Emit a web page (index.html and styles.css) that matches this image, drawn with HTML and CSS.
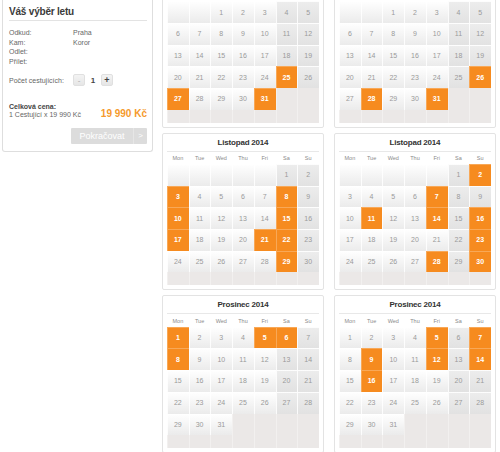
FILE: index.html
```html
<!DOCTYPE html>
<html lang="cs">
<head>
<meta charset="utf-8">
<title>Váš výběr letu</title>
<link rel="stylesheet" href="styles.css">
</head>
<body>
<div class="page">
  <aside class="sidebar">
    <h2 class="sb-title">Váš výběr letu</h2>
    <dl class="info">
      <dt>Odkud:</dt><dd>Praha</dd>
      <dt>Kam:</dt><dd>Koror</dd>
      <dt>Odlet:</dt><dd></dd>
      <dt>Přílet:</dt><dd></dd>
    </dl>
    <div class="pax">
      <span class="pax-label">Počet cestujících:</span>
      <span class="step minus">-</span>
      <span class="qty">1</span>
      <span class="step plus">+</span>
    </div>
    <div class="total">
      <div class="total-text">
        <div class="total-label">Celková cena:</div>
        <div>1 Cestující x 19 990 Kč</div>
      </div>
      <div class="price">19 990 Kč</div>
    </div>
    <div class="actions">
      <span class="btn"><span class="btn-text">Pokračovat</span><span class="btn-arrow">&gt;</span></span>
    </div>
  </aside>

  <main class="cals">
    <!-- Říjen left -->
    <section class="cal">
      <div class="cal-title">Říjen 2014</div>
      <div class="wd"><span>Mon</span><span>Tue</span><span>Wed</span><span>Thu</span><span>Fri</span><span>Sa</span><span>Su</span></div>
      <div class="days">
        <span></span><span></span><span>1</span><span>2</span><span>3</span><span class="w">4</span><span class="w">5</span>
        <span>6</span><span>7</span><span>8</span><span>9</span><span>10</span><span class="w">11</span><span class="w">12</span>
        <span>13</span><span>14</span><span>15</span><span>16</span><span>17</span><span class="w">18</span><span class="w">19</span>
        <span>20</span><span>21</span><span>22</span><span>23</span><span>24</span><span class="o">25</span><span class="w">26</span>
        <span class="o">27</span><span>28</span><span>29</span><span>30</span><span class="o">31</span><span class="x"></span><span class="x"></span>
        <span class="x"></span><span class="x"></span><span class="x"></span><span class="x"></span><span class="x"></span><span class="x"></span><span class="x"></span>
      </div>
    </section>
    <!-- Říjen right -->
    <section class="cal">
      <div class="cal-title">Říjen 2014</div>
      <div class="wd"><span>Mon</span><span>Tue</span><span>Wed</span><span>Thu</span><span>Fri</span><span>Sa</span><span>Su</span></div>
      <div class="days">
        <span></span><span></span><span>1</span><span>2</span><span>3</span><span class="w">4</span><span class="w">5</span>
        <span>6</span><span>7</span><span>8</span><span>9</span><span>10</span><span class="w">11</span><span class="w">12</span>
        <span>13</span><span>14</span><span>15</span><span>16</span><span>17</span><span class="w">18</span><span class="w">19</span>
        <span>20</span><span>21</span><span>22</span><span>23</span><span>24</span><span class="w">25</span><span class="o">26</span>
        <span>27</span><span class="o">28</span><span>29</span><span>30</span><span class="o">31</span><span class="x"></span><span class="x"></span>
        <span class="x"></span><span class="x"></span><span class="x"></span><span class="x"></span><span class="x"></span><span class="x"></span><span class="x"></span>
      </div>
    </section>
    <!-- Listopad left -->
    <section class="cal">
      <div class="cal-title">Listopad 2014</div>
      <div class="wd"><span>Mon</span><span>Tue</span><span>Wed</span><span>Thu</span><span>Fri</span><span>Sa</span><span>Su</span></div>
      <div class="days">
        <span></span><span></span><span></span><span></span><span></span><span class="w">1</span><span class="w">2</span>
        <span class="o">3</span><span>4</span><span>5</span><span>6</span><span>7</span><span class="o">8</span><span class="w">9</span>
        <span class="o">10</span><span>11</span><span>12</span><span>13</span><span>14</span><span class="o">15</span><span class="w">16</span>
        <span class="o">17</span><span>18</span><span>19</span><span>20</span><span class="o">21</span><span class="o">22</span><span class="w">23</span>
        <span>24</span><span>25</span><span>26</span><span>27</span><span>28</span><span class="o">29</span><span class="w">30</span>
        <span class="x"></span><span class="x"></span><span class="x"></span><span class="x"></span><span class="x"></span><span class="x"></span><span class="x"></span>
      </div>
    </section>
    <!-- Listopad right -->
    <section class="cal">
      <div class="cal-title">Listopad 2014</div>
      <div class="wd"><span>Mon</span><span>Tue</span><span>Wed</span><span>Thu</span><span>Fri</span><span>Sa</span><span>Su</span></div>
      <div class="days">
        <span></span><span></span><span></span><span></span><span></span><span class="w">1</span><span class="o">2</span>
        <span>3</span><span>4</span><span>5</span><span>6</span><span class="o">7</span><span class="w">8</span><span class="w">9</span>
        <span>10</span><span class="o">11</span><span>12</span><span>13</span><span class="o">14</span><span class="w">15</span><span class="o">16</span>
        <span>17</span><span>18</span><span>19</span><span>20</span><span>21</span><span class="w">22</span><span class="o">23</span>
        <span>24</span><span>25</span><span>26</span><span>27</span><span class="o">28</span><span class="w">29</span><span class="o">30</span>
        <span class="x"></span><span class="x"></span><span class="x"></span><span class="x"></span><span class="x"></span><span class="x"></span><span class="x"></span>
      </div>
    </section>
    <!-- Prosinec left -->
    <section class="cal">
      <div class="cal-title">Prosinec 2014</div>
      <div class="wd"><span>Mon</span><span>Tue</span><span>Wed</span><span>Thu</span><span>Fri</span><span>Sa</span><span>Su</span></div>
      <div class="days">
        <span class="o">1</span><span>2</span><span>3</span><span>4</span><span class="o">5</span><span class="o">6</span><span class="w">7</span>
        <span class="o">8</span><span>9</span><span>10</span><span>11</span><span>12</span><span class="w">13</span><span class="w">14</span>
        <span>15</span><span>16</span><span>17</span><span>18</span><span>19</span><span class="w">20</span><span class="w">21</span>
        <span>22</span><span>23</span><span>24</span><span>25</span><span>26</span><span class="w">27</span><span class="w">28</span>
        <span>29</span><span>30</span><span>31</span><span class="x"></span><span class="x"></span><span class="x"></span><span class="x"></span>
        <span class="x"></span><span class="x"></span><span class="x"></span><span class="x"></span><span class="x"></span><span class="x"></span><span class="x"></span>
      </div>
    </section>
    <!-- Prosinec right -->
    <section class="cal">
      <div class="cal-title">Prosinec 2014</div>
      <div class="wd"><span>Mon</span><span>Tue</span><span>Wed</span><span>Thu</span><span>Fri</span><span>Sa</span><span>Su</span></div>
      <div class="days">
        <span>1</span><span>2</span><span>3</span><span>4</span><span class="o">5</span><span class="w">6</span><span class="o">7</span>
        <span>8</span><span class="o">9</span><span>10</span><span>11</span><span class="o">12</span><span class="w">13</span><span class="o">14</span>
        <span>15</span><span class="o">16</span><span>17</span><span>18</span><span>19</span><span class="w">20</span><span class="w">21</span>
        <span>22</span><span>23</span><span>24</span><span>25</span><span>26</span><span class="w">27</span><span class="w">28</span>
        <span>29</span><span>30</span><span>31</span><span class="x"></span><span class="x"></span><span class="x"></span><span class="x"></span>
        <span class="x"></span><span class="x"></span><span class="x"></span><span class="x"></span><span class="x"></span><span class="x"></span><span class="x"></span>
      </div>
    </section>
  </main>
</div>
</body>
</html>
```

FILE: styles.css
```css
* { box-sizing: border-box; }

html, body { height: 100%; }

body {
  margin: 0;
  overflow: hidden;
  background: #fff;
  font-family: "Liberation Sans", Arial, sans-serif;
}

.page {
  display: flex;
  align-items: flex-start;
}

/* ---------- sidebar ---------- */
.sidebar {
  width: 151px;
  margin-left: 2px;
  border: 1px solid #dedede;
  border-top: 0;
  border-radius: 0 0 3px 3px;
  padding: 5px 5px 7px 6px;
  color: #666;
  font-size: 7px;
}

.sb-title {
  margin: 0;
  font-size: 10px;
  letter-spacing: -0.2px;
  font-weight: bold;
  color: #3a3a3a;
  line-height: 14px;
  padding-bottom: 1px;
  border-bottom: 1px solid #e3e3e3;
}

.info {
  margin: 7px 0 0;
  display: grid;
  grid-template-columns: 64px 1fr;
  line-height: 9.7px;
}

.info dt, .info dd { margin: 0; min-height: 9.7px; }

.pax {
  margin-top: 7.4px;
  display: flex;
  align-items: center;
  height: 12px;
}

.pax-label { width: 64px; }

.step {
  width: 12px;
  height: 12px;
  display: flex;
  align-items: center;
  justify-content: center;
  background: linear-gradient(#f3f3f3, #e6e6e6);
  border: 1px solid #e0e0e0;
  border-radius: 2px;
}

.minus { color: #aaa; font-size: 8px; }
.plus { color: #444; font-size: 9px; font-weight: bold; }

.qty {
  width: 16px;
  text-align: center;
  font-size: 8px;
  font-weight: bold;
  color: #444;
}

.total {
  margin-top: 16.4px;
  display: flex;
  justify-content: space-between;
  align-items: flex-end;
  line-height: 8px;
}

.total-label { font-weight: bold; color: #444; }

.price {
  font-size: 10px;
  line-height: 10px;
  font-weight: bold;
  color: #f59a2c;
  position: relative;
  top: 0.5px;
}

.actions {
  margin-top: 9.3px;
  display: flex;
  justify-content: flex-end;
}

.btn {
  width: 76px;
  height: 16px;
  display: flex;
  background: #dcdcdc;
  color: #fff;
  font-size: 9px;
  border-radius: 1px;
}

.btn-text {
  flex: 1;
  display: flex;
  align-items: center;
  justify-content: center;
}

.btn-arrow {
  width: 14px;
  display: flex;
  align-items: center;
  justify-content: center;
  border-left: 1px solid #e6e6e6;
  font-size: 8px;
}

/* ---------- calendars ---------- */
.cals {
  margin-left: 9px;
  margin-top: -30px;
  display: grid;
  grid-template-columns: 162px 162px;
  column-gap: 10px;
  row-gap: 5px;
}

.cal {
  border: 1px solid #e3e3e3;
  border-radius: 2px;
  padding: 0 4px 4px;
}

.cal-title {
  height: 18px;
  line-height: 17px;
  text-align: center;
  font-size: 8px;
  letter-spacing: -0.2px;
  font-weight: bold;
  color: #333;
  border-bottom: 1px solid #e8e8e8;
}

.wd {
  height: 12.3px;
  display: grid;
  grid-template-columns: repeat(7, 1fr);
  align-items: center;
  text-align: center;
  font-size: 5.5px;
  color: #8a8a8a;
}

.days {
  display: grid;
  grid-template-columns: repeat(7, 1fr);
  grid-template-rows: repeat(5, 21.7px) 13px;
}

.days span {
  display: flex;
  align-items: center;
  justify-content: center;
  font-size: 7px;
  color: #9a9a9a;
  background: linear-gradient(#ffffff, #ebebeb);
  box-shadow: inset 1px 1px 0 rgba(255, 255, 255, 0.85);
}

.days span.w {
  background: linear-gradient(#ededed, #e2e2e2);
}

.days span.x {
  background: #ebe8e7;
  box-shadow: inset 1px 0 0 rgba(255, 255, 255, 0.35);
}

.days span.o {
  background: #f68b1f;
  color: #fff;
  font-weight: bold;
  box-shadow: inset 1px 1px 0 rgba(255, 255, 255, 0.25);
}
```
